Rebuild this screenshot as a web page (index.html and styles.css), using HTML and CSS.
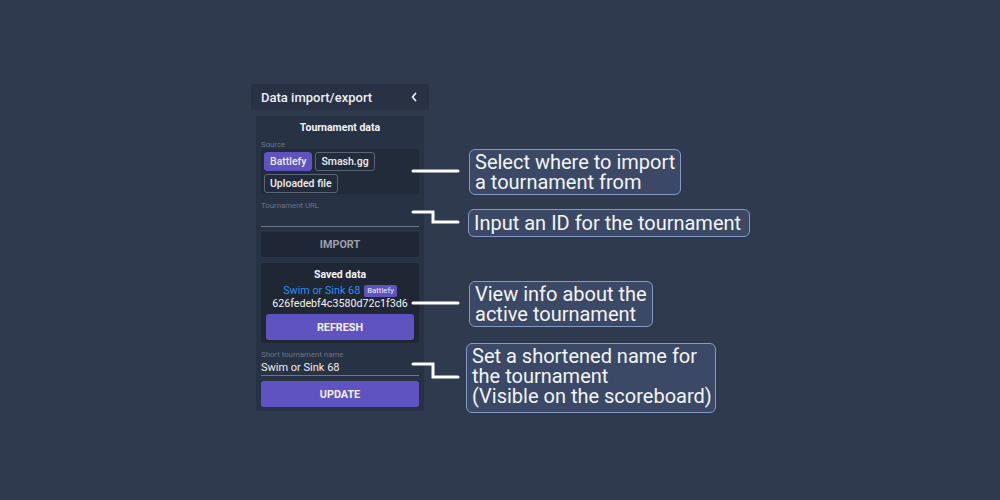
FILE: index.html
```html
<!DOCTYPE html>
<html>
<head>
<meta charset="utf-8">
<link rel="stylesheet" href="styles.css">
</head>
<body>
<div class="stage">
  <div class="panel">
    <div class="header">
      <span>Data import/export</span>
      <svg class="chev" width="8" height="10" viewBox="0 0 8 10"><path d="M5.5 1.5 L2.5 5 L5.5 8.5" fill="none" stroke="#e8eaf0" stroke-width="1.8" stroke-linecap="round" stroke-linejoin="round"/></svg>
    </div>
    <div class="body">
      <div class="title">Tournament data</div>
      <div class="label">Source</div>
      <div class="sources">
        <span class="chip active">Battlefy</span>
        <span class="chip">Smash.gg</span>
        <span class="chip">Uploaded file</span>
      </div>
      <div class="label url-label">Tournament URL</div>
      <div class="input empty"></div>
      <div class="btn dark">IMPORT</div>
      <div class="saved">
        <div class="title">Saved data</div>
        <div class="name-row"><span class="tname">Swim or Sink 68</span><span class="badge">Battlefy</span></div>
        <div class="hash">626fedebf4c3580d72c1f3d6</div>
        <div class="btn purple refresh">REFRESH</div>
      </div>
      <div class="label short-label">Short tournament name</div>
      <div class="input filled">Swim or Sink 68</div>
      <div class="btn purple update">UPDATE</div>
    </div>
  </div>

  <svg class="lines" width="1000" height="500" viewBox="0 0 1000 500">
    <g fill="none" stroke="#ffffff" stroke-width="3" stroke-linecap="round" stroke-linejoin="miter">
      <path d="M413 171 H458"/>
      <path d="M413 212 H433 V222 H458"/>
      <path d="M413 303 H458"/>
      <path d="M413 364 H433 V377 H458"/>
    </g>
  </svg>

  <div class="note n1">Select where to import<br>a tournament from</div>
  <div class="note n2">Input an ID for the tournament</div>
  <div class="note n3">View info about the<br>active tournament</div>
  <div class="note n4">Set a shortened name for<br>the tournament<br>(Visible on the scoreboard)</div>
</div>
</body>
</html>
```
FILE: styles.css
```css
* { box-sizing: border-box; }
html, body { margin: 0; padding: 0; }
body {
  background: #2f3a4f;
  font-family: Roboto, "Liberation Sans", sans-serif;
  color: #eef0f4;
}
.stage {
  position: relative;
  width: 1000px;
  height: 500px;
  padding: 84px 0 0 251px;
}
.panel { width: 178px; }
.header {
  height: 26px;
  background: #283244;
  display: flex;
  align-items: center;
  justify-content: space-between;
  padding: 0 11px 0 10px;
  font-size: 13px;
  font-weight: 500;
  color: #eceef3;
}
.chev { display: block; }
.body {
  margin: 6px 5px 0;
  background: #283245;
  border-radius: 3px;
  padding: 5px 5px 4px;
}
.title {
  text-align: center;
  font-size: 10.5px;
  font-weight: 700;
  line-height: 13px;
  color: #f2f3f6;
}
.label {
  font-size: 7.8px;
  line-height: 9px;
  color: #6a7487;
  margin-top: 6px;
}
.sources {
  background: #222b3a;
  border-radius: 3px;
  padding: 3px;
  display: flex;
  flex-wrap: wrap;
  gap: 3px;
  height: 45px;
  align-content: flex-start;
}
.chip {
  height: 19px;
  line-height: 17px;
  padding: 0 5px;
  font-size: 10.5px;
  font-weight: 500;
  color: #eef0f4;
  border: 1px solid #5c6577;
  border-radius: 3px;
}
.chip.active {
  background: #5f52c1;
  border-color: #5f52c1;
}
.url-label { margin-top: 7px; }
.input {
  border-bottom: 1px solid #6e7689;
  font-size: 11px;
  color: #eef0f4;
}
.input.empty { height: 17px; }
.btn {
  display: flex;
  align-items: center;
  justify-content: center;
  font-size: 10.8px;
  font-weight: 700;
  border-radius: 3px;
}
.btn.dark {
  margin-top: 5px;
  height: 25px;
  background: #1f2635;
  color: #9aa1ae;
}
.btn.purple {
  background: #5f52c1;
  color: #f2f2f8;
}
.saved {
  margin-top: 6px;
  background: #1f2634;
  border-radius: 3px;
  padding: 5px 5px 4px;
  height: 80px;
}
.name-row {
  display: flex;
  justify-content: center;
  align-items: center;
  gap: 4px;
  margin-top: 3px;
  height: 13px;
}
.tname {
  font-size: 10.8px;
  color: #2f8ef0;
}
.badge {
  background: #5f52c1;
  color: #eef0f8;
  font-size: 7.8px;
  padding: 1px 3px;
  border-radius: 2px;
  line-height: 10px;
}
.hash {
  text-align: center;
  font-size: 10.7px;
  line-height: 13px;
  color: #f2f3f6;
}
.refresh {
  margin-top: 4px;
  height: 26px;
}
.short-label { margin-top: 7px; }
.input.filled {
  height: 17px;
  line-height: 15px;
  padding-top: 1px;
}
.update {
  margin-top: 5px;
  height: 26px;
}
.lines {
  position: absolute;
  left: 0;
  top: 0;
}
.note {
  position: absolute;
  background: #3c4966;
  border: 1px solid #8599c6;
  border-radius: 6px;
  padding: 2px 6px 3px 5px;
  font-size: 20px;
  line-height: 20px;
  color: #f3f5f8;
  white-space: nowrap;
}
.n1 { left: 469px; top: 149px; width: 212px; height: 46px; }
.n2 { left: 468px; top: 209px; width: 282px; height: 28px; padding-top: 3px; }
.n3 { left: 469px; top: 281px; width: 184px; height: 46px; }
.n4 { left: 466px; top: 343px; width: 250px; height: 70px; }
```
